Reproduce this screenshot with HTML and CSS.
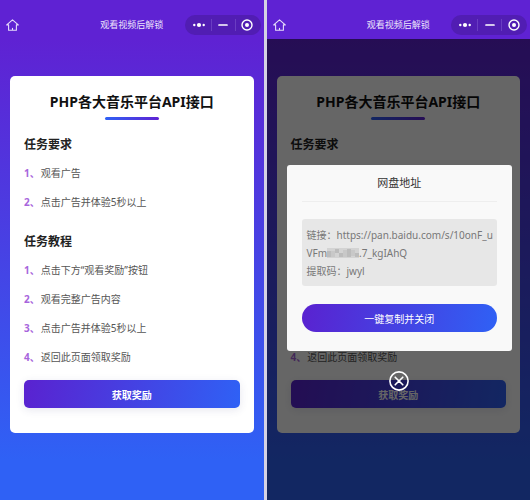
FILE: index.html
```html
<!DOCTYPE html>
<html lang="zh-CN">
<head>
<meta charset="utf-8">
<meta name="viewport" content="width=device-width, initial-scale=1">
<title>观看视频后解锁</title>
<link rel="stylesheet" href="styles.css">
</head>
<body>
<svg class="defs" aria-hidden="true">
  <symbol id="home" viewBox="0 0 13 12"><path d="M2.6 5.9v5.4h7.8V5.9h1.9L6.5.8.7 5.9h1.9M6.5 9.2v2" fill="none" stroke="#e6dcfa" stroke-width="1.1" stroke-linejoin="round" stroke-linecap="round"/></symbol>
  <symbol id="more" viewBox="0 0 12 6"><circle cx="1.3" cy="3" r="1.2" fill="#fff"/><circle cx="6" cy="3" r="2.1" fill="#fff"/><circle cx="10.7" cy="3" r="1.2" fill="#fff"/></symbol>
  <symbol id="minus" viewBox="0 0 10 4"><path d="M1 2h8" stroke="#fff" stroke-width="1.7" stroke-linecap="round"/></symbol>
  <symbol id="target" viewBox="0 0 12 12"><circle cx="6" cy="6" r="5" fill="none" stroke="#fff" stroke-width="1.4"/><circle cx="6" cy="6" r="2" fill="#fff"/></symbol>
</svg>
<div class="screens">
  <section class="phone">
    <header class="nav">
      <button class="icon-button" type="button" aria-label="首页"><svg class="home"><use href="#home"/></svg></button>
      <h1 class="nav-title">观看视频后解锁</h1>
      <div class="capsule">
        <button type="button" aria-label="更多"><svg class="more"><use href="#more"/></svg></button>
        <button type="button" aria-label="最小化"><svg class="minus"><use href="#minus"/></svg></button>
        <button type="button" aria-label="关闭"><svg class="target"><use href="#target"/></svg></button>
      </div>
    </header>
    <main class="content">
      <article class="card">
        <h2 class="card-title">PHP各大音乐平台API接口</h2>
        <h3 class="heading">任务要求</h3>
        <ol class="steps">
          <li><b>1、</b>观看广告</li>
          <li><b>2、</b>点击广告并体验5秒以上</li>
        </ol>
        <h3 class="heading">任务教程</h3>
        <ol class="steps">
          <li><b>1、</b>点击下方“观看奖励”按钮</li>
          <li><b>2、</b>观看完整广告内容</li>
          <li><b>3、</b>点击广告并体验5秒以上</li>
          <li><b>4、</b>返回此页面领取奖励</li>
        </ol>
        <button class="primary" type="button">获取奖励</button>
      </article>
    </main>
  </section>

  <section class="phone">
    <header class="nav">
      <button class="icon-button" type="button" aria-label="首页"><svg class="home"><use href="#home"/></svg></button>
      <h1 class="nav-title">观看视频后解锁</h1>
      <div class="capsule">
        <button type="button" aria-label="更多"><svg class="more"><use href="#more"/></svg></button>
        <button type="button" aria-label="最小化"><svg class="minus"><use href="#minus"/></svg></button>
        <button type="button" aria-label="关闭"><svg class="target"><use href="#target"/></svg></button>
      </div>
    </header>
    <main class="content">
      <article class="card">
        <h2 class="card-title">PHP各大音乐平台API接口</h2>
        <h3 class="heading">任务要求</h3>
        <ol class="steps">
          <li><b>1、</b>观看广告</li>
          <li><b>2、</b>点击广告并体验5秒以上</li>
        </ol>
        <h3 class="heading">任务教程</h3>
        <ol class="steps">
          <li><b>1、</b>点击下方“观看奖励”按钮</li>
          <li><b>2、</b>观看完整广告内容</li>
          <li><b>3、</b>点击广告并体验5秒以上</li>
          <li><b>4、</b>返回此页面领取奖励</li>
        </ol>
        <button class="primary" type="button">获取奖励</button>
      </article>
      <div class="overlay">
        <div class="dialog" role="dialog" aria-labelledby="dialog-title">
          <h2 class="dialog-title" id="dialog-title">网盘地址</h2>
          <p class="link-box">链接：https://pan.baidu.com/s/10onF_u<br>VFm<svg class="mosaic" viewBox="0 0 32 10"><path fill="#d3d3d3" d="M0 0h32v10H0z"/><path fill="#bcbcbc" d="M0 3h4v6H0zM8 1h4v4H8zM12 5h4v4h-4zM20 1h4v8h-4zM28 5h4v4h-4z"/><path fill="#c8c8c8" d="M4 3h4v6H4zM16 2h4v7h-4zM24 2h4v6h-4z"/></svg>.7_kgIAhQ<br>提取码：jwyl</p>
          <button class="copy" type="button">一键复制并关闭</button>
        </div>
        <button class="close" type="button" aria-label="关闭弹窗"><svg viewBox="0 0 20 20"><circle cx="10" cy="10" r="9.1" fill="none" stroke="#fff" stroke-width="1.6"/><path d="m6.2 6.2 7.6 7.6m0-7.6-7.6 7.6" stroke="#fff" stroke-width="1.6" stroke-linecap="round"/></svg></button>
      </div>
    </main>
  </section>
</div>
</body>
</html>
```
FILE: styles.css
```css
* { box-sizing: border-box; }

body {
  margin: 0;
  font-family: "Noto Sans", "Noto Sans CJK SC", sans-serif;
  font-size: 10px;
  color: #555;
}

h1, h2, h3, p, ol { margin: 0; padding: 0; }
button { padding: 0; border: 0; background: none; font: inherit; color: inherit; }
svg { display: block; }
.defs { position: absolute; width: 0; height: 0; }

.screens {
  display: grid;
  grid-template-columns: 1fr 1fr;
  gap: 3px;
  min-height: 100vh;
  background: #d5d2e4;
}

.phone {
  display: flex;
  flex-direction: column;
  background: linear-gradient(#5f22d3 8%, #2f61f5 92%);
}

.nav {
  display: grid;
  grid-template-columns: 1fr auto 1fr;
  align-items: center;
  padding: 11px 3px 0;
  height: 39px;
  background: #5f22d3;
}
.icon-button { justify-self: start; margin-left: 3px; }
.home { width: 13px; height: 12px; }
.nav-title { font-size: 9px; font-weight: 400; line-height: 14px; color: #eee6fc; }

.capsule {
  justify-self: end;
  display: grid;
  grid-template-columns: repeat(3, 1fr);
  align-items: center;
  width: 76px;
  height: 20px;
  padding: 0 2px;
  border-radius: 10px;
  background: #511db3;
}
.capsule button { display: grid; place-items: center; height: 12px; }
.capsule button + button { border-left: 1px solid #6a3dc2; }
.more { width: 12px; height: 6px; }
.minus { width: 10px; height: 4px; }
.target { width: 12px; height: 12px; }

.content { position: relative; flex: 1; padding: 37px 10px 0; }

.card {
  padding: 16px 14px 25px;
  border-radius: 5px;
  background: #fff;
}
.card-title {
  font-size: 14px;
  line-height: 20px;
  text-align: center;
  color: #111;
}
.card-title::after {
  content: "";
  display: block;
  width: 54px;
  height: 3px;
  margin: 5px auto 0;
  border-radius: 2px;
  background: linear-gradient(90deg, #2f61f5, #5f22d3);
}
.heading { margin-top: 15px; font-size: 12px; line-height: 20px; color: #222; }
.steps { margin-top: 4px; list-style: none; line-height: 29px; }
.steps b { margin-right: 1px; color: #a765dc; }

.primary, .copy {
  display: block;
  width: 100%;
  height: 28px;
  color: #fff;
  background: linear-gradient(100deg, #5a22d0, #2f61f5);
}
.primary {
  margin-top: 8px;
  border-radius: 5px;
  font-weight: 700;
  box-shadow: 0 2px 8px rgba(60, 60, 120, .12);
}

.overlay {
  position: absolute;
  inset: 0;
  display: flex;
  flex-direction: column;
  align-items: center;
  padding: 126px 18px 0 20px;
  background: rgba(0, 0, 0, .6);
}
.dialog {
  width: 100%;
  padding: 0 15px 19px;
  border-radius: 3px;
  background: #f9f9f9;
}
.dialog-title {
  border-bottom: 1px solid #eee;
  font-size: 11px;
  font-weight: 400;
  line-height: 36px;
  text-align: center;
  color: #333;
}
.link-box {
  margin-top: 17px;
  padding: 7px 0 6px 5px;
  border-radius: 3px;
  line-height: 18px;
  overflow-wrap: anywhere;
  color: #777;
  background: #e7e7e7;
}
.mosaic { display: inline-block; width: 32px; height: 10px; vertical-align: -1px; }
.copy { margin-top: 18px; border-radius: 14px; }
.close { margin-top: 20px; }
.close svg { width: 20px; height: 20px; }
```
